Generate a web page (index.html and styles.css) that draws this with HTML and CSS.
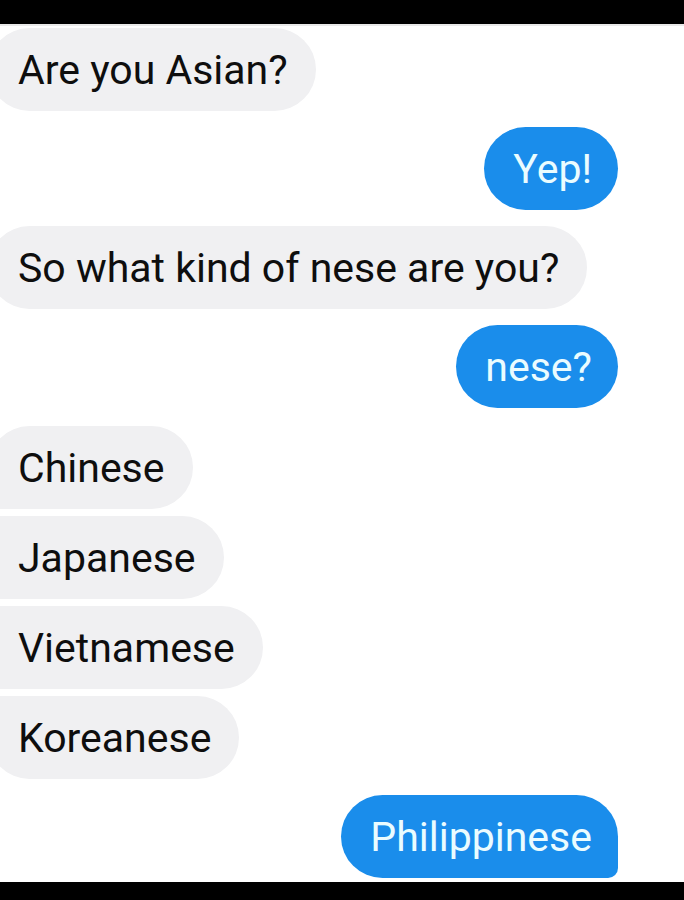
FILE: index.html
```html
<!DOCTYPE html>
<html>
<head>
<meta charset="utf-8">
<link rel="stylesheet" href="styles.css">
</head>
<body>
<div class="screen">
  <div class="bar top"></div>
  <div class="chat">
    <div class="group in">
      <div class="bubble in-b solo">Are you Asian?</div>
    </div>
    <div class="group out">
      <div class="bubble out-b">Yep!</div>
    </div>
    <div class="group in">
      <div class="bubble in-b solo">So what kind of nese are you?</div>
    </div>
    <div class="group out">
      <div class="bubble out-b">nese?</div>
    </div>
    <div class="group in list">
      <div class="bubble in-b first">Chinese</div>
      <div class="bubble in-b mid">Japanese</div>
      <div class="bubble in-b mid">Vietnamese</div>
      <div class="bubble in-b last">Koreanese</div>
    </div>
    <div class="group out">
      <div class="bubble out-b tail">Philippinese</div>
    </div>
  </div>
  <div class="bar bottom"></div>
</div>
</body>
</html>
```
FILE: styles.css
```css
* { box-sizing: border-box; }
html, body {
  margin: 0;
  padding: 0;
  background: #ffffff;
}
.screen {
  width: 684px;
  height: 900px;
  display: flex;
  flex-direction: column;
  overflow: hidden;
  font-family: Roboto, "Liberation Sans", sans-serif;
}
.bar {
  background: #000;
  flex: none;
}
.bar.top {
  height: 26px;
  border-bottom: 2px solid #e9e9e9;
}
.bar.bottom { height: 18px; }
.chat {
  flex: 1;
  display: flex;
  flex-direction: column;
  gap: 16px;
  padding-top: 2px;
}
.group {
  display: flex;
  flex-direction: column;
  gap: 7px;
}
.group.list { margin-top: 2px; }
.group.in { align-items: flex-start; }
.group.out { align-items: flex-end; padding-right: 66px; }
.bubble {
  height: 83px;
  display: flex;
  align-items: center;
  font-size: 41px;
  white-space: nowrap;
}
.in-b {
  background: #f0f0f2;
  color: #0e0e0e;
  margin-left: -12px;
  padding: 0 28px 0 30px;
  border-radius: 42px;
}
.in-b.first { border-radius: 42px 42px 42px 14px; }
.in-b.mid { border-radius: 14px 42px 42px 14px; }
.in-b.last { border-radius: 14px 42px 42px 42px; }
.out-b {
  background: #1a8deb;
  color: #eafcff;
  padding: 0 26px 0 29px;
  border-radius: 42px;
}
.out-b.tail { border-radius: 42px 42px 10px 42px; }
```
